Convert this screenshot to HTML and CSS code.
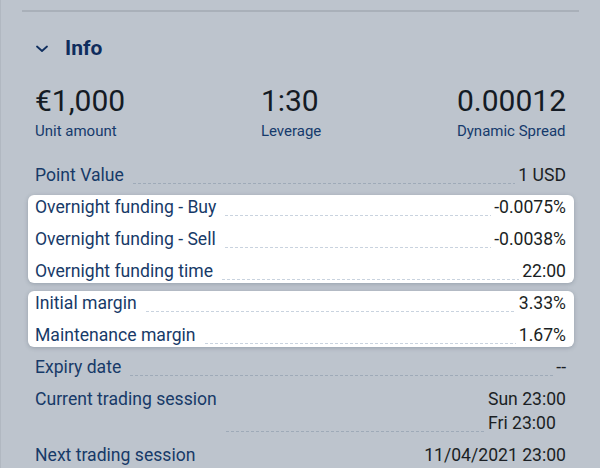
FILE: index.html
```html
<!DOCTYPE html>
<html>
<head>
<meta charset="utf-8">
<link rel="stylesheet" href="styles.css">
</head>
<body>
<div class="panel">
  <div class="divider"></div>
  <div class="header">
    <svg class="chevron" width="12" height="8" viewBox="0 0 12 8"><path d="M1 1.5 L6 6 L11 1.5" fill="none" stroke="#102f5f" stroke-width="1.8" stroke-linecap="round" stroke-linejoin="round"/></svg>
    <span class="title">Info</span>
  </div>
  <div class="stats">
    <div class="stat"><div class="big">€1,000</div><div class="cap">Unit amount</div></div>
    <div class="stat"><div class="big">1:30</div><div class="cap">Leverage</div></div>
    <div class="stat"><div class="big">0.00012</div><div class="cap">Dynamic Spread</div></div>
  </div>
  <div class="rows">
    <div class="row"><span class="label">Point Value</span><span class="leader"></span><span class="value">1 USD</span></div>
    <div class="card">
      <div class="row"><span class="label">Overnight funding - Buy</span><span class="leader"></span><span class="value">-0.0075%</span></div>
      <div class="row"><span class="label">Overnight funding - Sell</span><span class="leader"></span><span class="value">-0.0038%</span></div>
      <div class="row"><span class="label">Overnight funding time</span><span class="leader"></span><span class="value">22:00</span></div>
    </div>
    <div class="card">
      <div class="row"><span class="label">Initial margin</span><span class="leader"></span><span class="value">3.33%</span></div>
      <div class="row"><span class="label">Maintenance margin</span><span class="leader"></span><span class="value">1.67%</span></div>
    </div>
    <div class="row"><span class="label">Expiry date</span><span class="leader"></span><span class="value">--</span></div>
    <div class="row"><span class="label">Current trading session</span><span class="leader"></span><span class="value">Sun 23:00<br>Fri 23:00</span></div>
    <div class="row"><span class="label">Next trading session</span><span class="leader leader-last"></span><span class="value">11/04/2021 23:00</span></div>
  </div>
</div>
</body>
</html>
```
FILE: styles.css
```css
html, body {
  margin: 0;
  padding: 0;
}
body {
  width: 600px;
  height: 468px;
  overflow: hidden;
  background: #bdc4cd;
  font-family: Roboto, "Liberation Sans", sans-serif;
}
.panel {
  height: 468px;
  box-sizing: border-box;
  border-left: 1px solid #b1b8c1;
  padding: 10px 34px 0 34px;
}
.divider {
  height: 2px;
  background: #a9b0b9;
  margin: 0 -13px 0 -13px;
}
.header {
  display: flex;
  align-items: center;
  margin-top: 24px;
  height: 24px;
}
.chevron {
  margin-left: 1px;
  margin-top: 2px;
}
.title {
  margin-left: 17px;
  font-size: 21px;
  line-height: 24px;
  font-weight: 700;
  color: #0f2d5d;
}
.stats {
  display: flex;
  justify-content: space-between;
  margin-top: 23px;
}
.big {
  font-size: 30px;
  line-height: 36px;
  color: #141b24;
}
.cap {
  margin-top: 2px;
  font-size: 15px;
  line-height: 20px;
  color: #153a6c;
}
.rows {
  display: flex;
  flex-direction: column;
  gap: 8px;
  margin-top: 22px;
}
.card {
  display: flex;
  flex-direction: column;
  gap: 8px;
  background: #ffffff;
  border-radius: 6px;
  margin: 0 -8px 0 -7px;
  padding: 0 8px 0 7px;
  box-shadow: 0 1px 4px rgba(40, 55, 75, 0.25);
}
.row {
  display: flex;
  font-size: 17.6px;
  line-height: 24px;
}
.label {
  color: #173a68;
  white-space: nowrap;
}
.value {
  color: #1b1f24;
  white-space: nowrap;
}
.leader {
  flex: 1;
  align-self: flex-end;
  height: 1px;
  margin: 0 3px 3px 9px;
  background: repeating-linear-gradient(to right, #9eaab8 0, #9eaab8 3px, transparent 3px, transparent 5px);
}
.card .leader {
  background: repeating-linear-gradient(to right, #c9d3df 0, #c9d3df 3px, transparent 3px, transparent 5px);
}
.leader-last {
  background: none;
}
```
